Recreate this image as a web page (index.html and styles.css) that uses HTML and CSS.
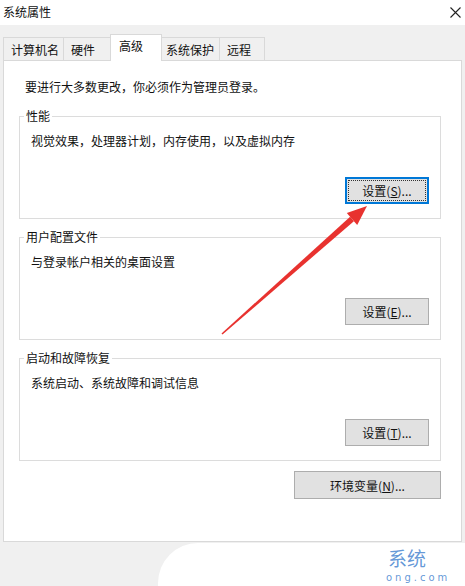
FILE: index.html
```html
<!DOCTYPE html>
<html lang="zh-CN">
<head>
    <meta charset="UTF-8">
    <meta name="viewport" content="width=device-width, initial-scale=1.0">
    <title>系统属性</title>
    <link rel="stylesheet" href="styles.css">
</head>
<body>
    <div class="window">
        <div class="titlebar">
            <span class="title">系统属性</span>
            <svg class="close-icon" width="11" height="11" viewBox="0 0 11 11">
                <path d="M0.5 0.5 L10.5 10.5 M10.5 0.5 L0.5 10.5" stroke="#222" stroke-width="1.1" fill="none"/>
            </svg>
        </div>

        <div class="tabs">
            <div class="tab tab-name">计算机名</div>
            <div class="tab tab-hw">硬件</div>
            <div class="tab tab-adv active">高级</div>
            <div class="tab tab-protect">系统保护</div>
            <div class="tab tab-remote">远程</div>
        </div>

        <div class="panel">
            <p class="notice">要进行大多数更改，你必须作为管理员登录。</p>

            <fieldset class="group">
                <legend>性能</legend>
                <p class="group-desc">视觉效果，处理器计划，内存使用，以及虚拟内存</p>
                <div class="group-actions">
                    <button class="btn focused">设置(<u>S</u>)...</button>
                </div>
            </fieldset>

            <fieldset class="group">
                <legend>用户配置文件</legend>
                <p class="group-desc">与登录帐户相关的桌面设置</p>
                <div class="group-actions">
                    <button class="btn">设置(<u>E</u>)...</button>
                </div>
            </fieldset>

            <fieldset class="group">
                <legend>启动和故障恢复</legend>
                <p class="group-desc">系统启动、系统故障和调试信息</p>
                <div class="group-actions">
                    <button class="btn">设置(<u>T</u>)...</button>
                </div>
            </fieldset>

            <div class="env-row">
                <button class="btn btn-wide">环境变量(<u>N</u>)...</button>
            </div>
        </div>

        <!-- red pointer drawn on top of the dialog -->
        <svg class="arrow" width="465" height="586" viewBox="0 0 465 586">
            <polygon points="221.5,333.4 222.5,334.6 353.9,221.2 350.1,216.8" fill="#e8322f"/>
            <polygon points="367,206 346.8,212.9 357.2,225.1" fill="#e8322f"/>
        </svg>

        <div class="watermark">
            <span class="wm-big">系统</span>
            <span class="wm-small">ong.com</span>
        </div>
    </div>
</body>
</html>
```

FILE: styles.css
```css
body {
    margin: 0;
    font-family: "Noto Sans CJK SC", "Noto Sans", sans-serif;
    font-size: 12px;
    color: #111;
}

.window {
    position: relative;
    width: 465px;
    height: 586px;
    background: #f0f0f0;
    overflow: hidden;
}

.titlebar {
    height: 25px;
    background: #fff;
    display: flex;
    align-items: center;
    justify-content: space-between;
    padding: 0 3px 1px 3px;
    box-sizing: border-box;
}

.title {
    font-size: 12px;
    line-height: 16px;
}

.close-icon {
    margin-right: 1px;
}

.tabs {
    display: flex;
    align-items: flex-end;
    height: 24px;
    margin-top: 11px;
    padding-left: 3px;
}

.tab {
    height: 23px;
    box-sizing: border-box;
    border: 1px solid #d9d9d9;
    border-bottom: none;
    border-right: none;
    background: #f0f0f0;
    line-height: 23px;
    padding-left: 7px;
}

.tab-name { width: 60px; }
.tab-hw { width: 47px; }
.tab-protect { width: 57px; padding-left: 4px; }
.tab-remote { width: 46px; border-right: 1px solid #d9d9d9; }

.tab.active {
    width: 52px;
    height: 27px;
    margin-bottom: -1px;
    background: #fff;
    border-right: 1px solid #d9d9d9;
    line-height: 22px;
    padding-left: 8px;
    position: relative;
    z-index: 1;
}

.tab-adv + .tab {
    border-left: none;
}

.panel {
    height: 482px;
    margin: 0 3px;
    box-sizing: border-box;
    background: #fff;
    border: 1px solid #d9d9d9;
    padding: 18px 20px 0 15px;
}

.notice {
    margin: 0 0 13px 6px;
    line-height: 16px;
}

.group {
    margin: 0 0 10px 0;
    padding: 0 11px 14px 11px;
    border: 1px solid #dcdcdc;
    min-width: 0;
}

.group legend {
    padding: 0 2px;
    margin-left: -7px;
    line-height: 16px;
}

.group-desc {
    margin: 9px 0 0 0;
    line-height: 16px;
}

.group-actions {
    display: flex;
    justify-content: flex-end;
    margin-top: 28px;
}

.btn {
    width: 84px;
    height: 27px;
    padding: 0;
    background: #e1e1e1;
    border: 1px solid #adadad;
    font-family: inherit;
    font-size: 12px;
    color: #111;
}

.btn.focused {
    border: 2px solid #0078d7;
    outline: 1px dotted #333;
    outline-offset: -4px;
}

.btn-wide {
    width: 147px;
    height: 28px;
}

.env-row {
    display: flex;
    justify-content: flex-end;
    margin-top: 8px;
}

.arrow {
    position: absolute;
    left: 0;
    top: 0;
    pointer-events: none;
}

.watermark {
    position: absolute;
    left: 158px;
    top: 543px;
    width: 320px;
    height: 60px;
    background: #fff;
    border-radius: 40px 0 0 0;
}

.wm-big {
    position: absolute;
    left: 230px;
    top: 5px;
    font-size: 19px;
    line-height: 20px;
    color: rgba(60, 125, 205, 0.8);
}

.wm-small {
    position: absolute;
    left: 228px;
    top: 29px;
    font-family: "DejaVu Sans", sans-serif;
    font-size: 10px;
    line-height: 11px;
    letter-spacing: 3px;
    color: rgba(60, 125, 205, 0.8);
}
```
